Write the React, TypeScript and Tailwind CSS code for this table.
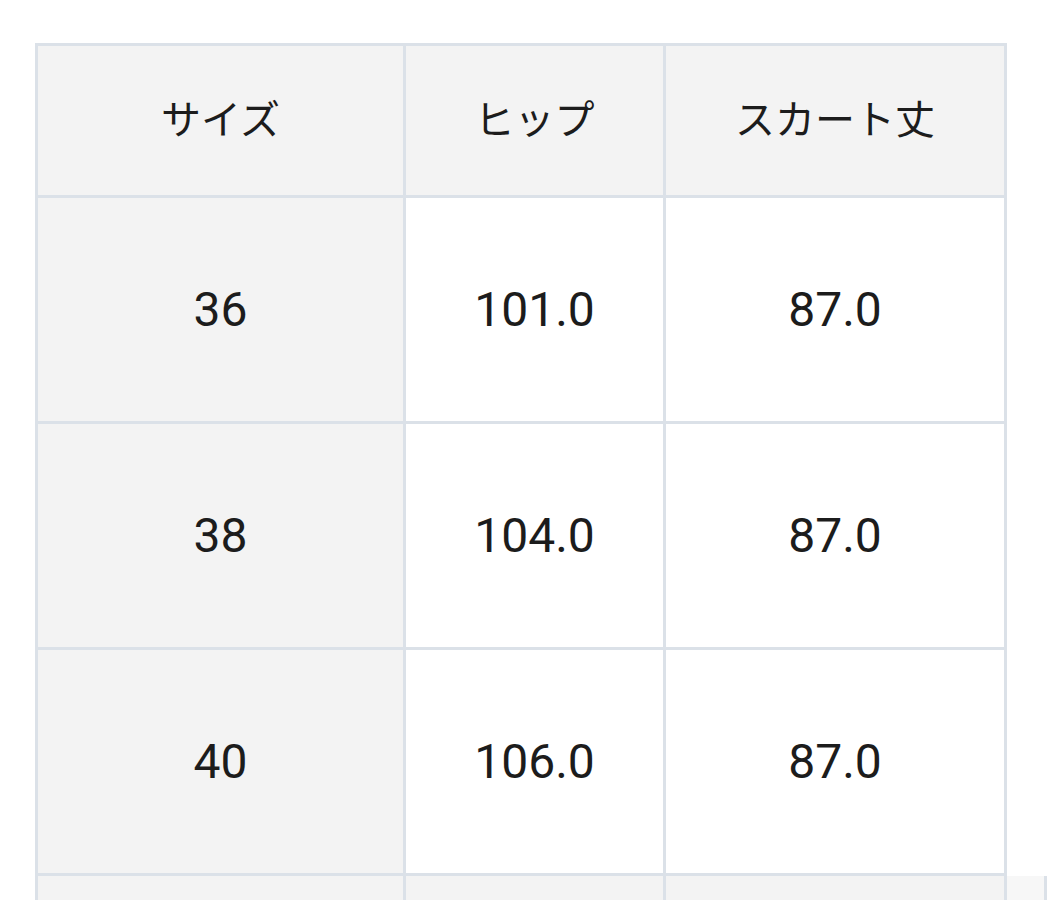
const rows = [
  { size: "36", hip: "101.0", length: "87.0" },
  { size: "38", hip: "104.0", length: "87.0" },
  { size: "40", hip: "106.0", length: "87.0" },
];

const cell = "flex items-center justify-center border-r-[3px] border-b-[3px] border-[#dbe1e8]";
const head = `${cell} h-[155px] border-t-[3px] bg-[#f3f3f3]`;

export default function App() {
  return (
    <div
      className="h-[900px] w-full overflow-hidden bg-white pt-[43px] text-[#1c1c1c]"
      style={{ fontFamily: "Roboto, 'Noto Sans CJK JP', sans-serif" }}
    >
      <div className="ml-[35px] w-max border-l-[3px] border-[#dbe1e8]">
        <div className="grid grid-cols-[368px_260px_341px_40px] text-[40px]">
          <div className={head}>サイズ</div>
          <div className={head}>ヒップ</div>
          <div className={head}>スカート丈</div>
          <div />
        </div>
        {rows.map((r) => (
          <div key={r.size} className="grid grid-cols-[368px_260px_341px_40px] text-[48px]">
            <div className={`${cell} h-[226px] bg-[#f3f3f3]`}>{r.size}</div>
            <div className={`${cell} h-[226px] bg-white`}>{r.hip}</div>
            <div className={`${cell} h-[226px] bg-white`}>{r.length}</div>
            <div />
          </div>
        ))}
        <div className="grid grid-cols-[368px_260px_341px_40px]">
          <div className={`${cell} h-[120px] bg-[#f3f3f3]`} />
          <div className={`${cell} h-[120px] bg-[#f3f3f3]`} />
          <div className={`${cell} h-[120px] bg-[#f3f3f3]`} />
          <div className={`${cell} h-[120px] bg-[#f7f7f7]`} />
        </div>
      </div>
    </div>
  );
}
